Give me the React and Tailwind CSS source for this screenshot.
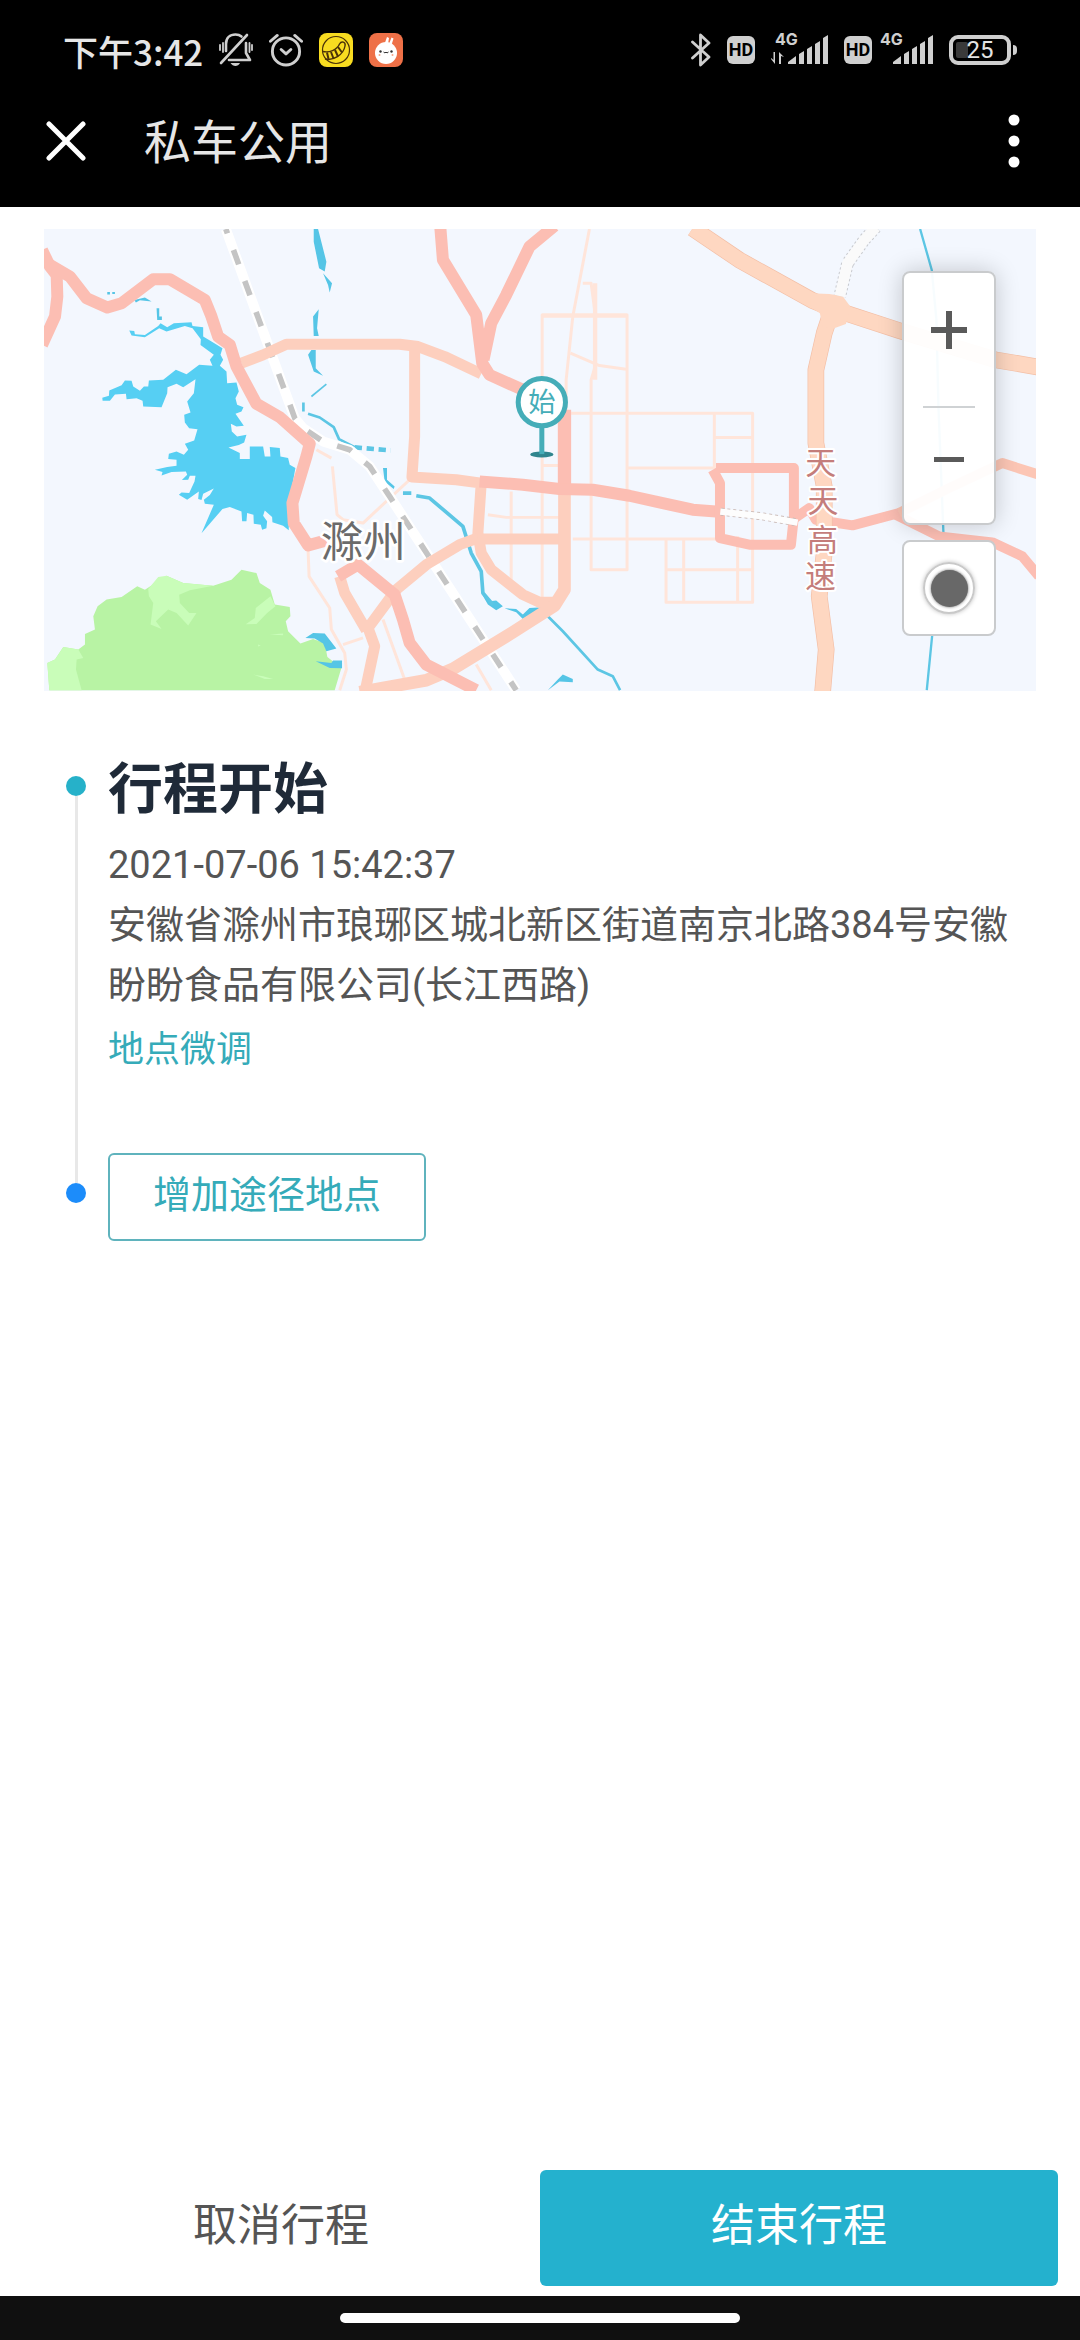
const LAKE =
  'M298 332L313 333L315 343L345 345L385 318L392 310L412 322L432 310L485 307L488 318L520 322L520 350L545 365L578 385L572 405L580 420L570 438L590 455L592 490L620 488L627 515L617 535L622 555L641 562L635 575L617 582L642 618L620 620L603 612L606 635L622 650L650 645L643 668L627 676L596 683L630 700L630 718L660 718L660 680L700 680L705 710L722 710L720 682L750 685L752 710L775 715L780 735L797 745L778 850L777 932L760 918L728 908L727 892L705 872L700 888L712 905L710 926L697 930L693 915L672 912L671 885L652 880L650 905L637 905L635 875L600 862L578 868L515 941L552 855L525 852L522 840L540 826L552 806L520 822L515 841L505 838L507 815L472 840L447 825L455 818L478 820L494 785L497 768L480 768L475 780L456 781L472 765L468 755L425 757L395 767L398 757L375 750L412 742L440 738L440 720L415 718L417 702L440 695L462 705L475 690L465 672L493 662L503 628L478 625L465 608L463 585L482 578L472 545L492 520L497 478L460 502L440 492L413 502L412 520L395 562L340 560L338 543L320 535L290 538L288 522L255 524L240 543L218 543L217 534L237 528L238 512L275 496L285 482L305 483L310 500L330 513L342 500L355 500L357 482L400 480L438 450L470 463L508 435L548 438L540 420L552 405L512 375L513 358L488 325L465 318L410 335L388 325L345 352L305 347Z';

const PARK =
  'M52 1330L75 1320L100 1282L145 1290L165 1275L165 1243L195 1230L190 1190L203 1160L230 1140L275 1132L322 1100L345 1110L410 1068L460 1090L550 1098L605 1080L635 1050L680 1060L690 1090L722 1110L735 1155L780 1162L782 1190L768 1205L775 1235L812 1272L850 1258L885 1270L893 1312L935 1345L915 1412H58Z';

function RouteMap() {
  return (
    <svg
      viewBox="42 27 2979 1386"
      className="block w-full bg-[#f3f7fe]"
      role="img"
      aria-label="滁州"
      fill="none"
      strokeLinejoin="round"
    >
      {/* Park */}
      <path d={PARK} fill="#b8f3a4" />
      <g fill="#c9fdb9">
        <path d="M355 1108L385 1072L410 1068L460 1090L550 1098L480 1112L448 1125L450 1150L478 1180L500 1180L475 1218L440 1180L415 1170L378 1205L395 1228L362 1215L370 1150L357 1130Z" />
        <path d="M722 1130L737 1160L712 1180L680 1213L648 1214L675 1195L678 1165Z" />
        <path d="M52 1330L75 1320L100 1282L145 1290L160 1315L140 1320L138 1350L155 1412H58Z" />
        <path d="M720 1245l40-3v5zM685 1275l8 3l-8 3zM670 1365l30 5l30 8h-25z" />
      </g>

      {/* Water */}
      <path d={LAKE} fill="#56cff3" />
      <g fill="#55c5e6">
        <path d="M827 1255L850 1240L885 1242L920 1287L890 1295L880 1272L855 1257ZM858 1325L905 1330L910 1323H937V1346L900 1345Z" />
        <path d="M852 27H865L890 125L885 155L868 145L852 65ZM880 160L907 190L900 218L895 195ZM867 268L862 325L867 348H852L850 290ZM845 390H858V445L880 468L852 455L835 405Z" />
        <path d="M232 216h8v8h-8zM247 216h8v6h-8zM380 265h8v25h8v10h-14zM313 240L345 233L365 245L330 241L318 248Z" />
        <path d="M1060 745H1072V780L1095 800L1092 808L1065 785ZM1555 1412L1585 1380L1600 1365L1630 1378V1388L1590 1386Z" />
        <path d="M1355 1120L1380 1145L1400 1143L1420 1160L1400 1172L1375 1155ZM1425 1166L1460 1168L1480 1185L1500 1165L1540 1163L1480 1198L1460 1178Z" />
      </g>
      <g stroke="#5cc6e4">
        <path d="M845 530L890 493" strokeWidth="5" />
        <path d="M821 548V575M835 582L870 593L912 622L928 658L975 682" strokeWidth="8" />
        <path d="M975 683L1060 690L1083 692" strokeWidth="14" strokeDasharray="22 14" />
        <path d="M1120 820H1145M1160 828L1200 835L1300 920L1325 1000L1355 1055L1360 1120L1390 1155" strokeWidth="11" />
        <path d="M1555 1190L1600 1235L1705 1350L1750 1370L1772 1412" strokeWidth="8" />
        <path d="M2673 27L2708 150L2722 300L2728 560L2743 940M2710 1240L2693 1412" strokeWidth="7" />
      </g>

      {/* Local streets */}
      <g stroke="#ffe5da" strokeWidth="9">
        <path d="M1680 27L1630 290L1610 480V570M1660 190H1685L1697 280V440L1685 480V1050H1793V285H1538V1150" />
        <path d="M1538 287H1793M1697 190V480" strokeWidth="13" />
        <path d="M1623 400L1710 437L1790 448M1625 580H2170V1148H1910V958M1793 745H2060M1630 958H2130M1910 1050H2170M1963 958V1148M2055 580V740M2055 653H2170M2125 950V1148" />
        <path d="M1538 737H1590M1445 815V1110M1375 885L1430 893H1590" />
        <path d="M908 740L922 885L940 900L1000 910L1140 780M860 690L905 715M835 990L838 1070L900 1165L905 1230L945 1300L950 1350L930 1412M940 1275L1000 1255M1060 1200L1125 1380M1340 1335L1385 1412" />
      </g>

      {/* Railway */}
      <path d="M588 27L795 595L820 625L880 665L960 690L1020 740L1080 830L1460 1412" stroke="#fff" strokeWidth="30" />
      <path d="M588 27L795 595L820 625L880 665L960 690L1020 740L1080 830L1460 1412" stroke="#c4c4c4" strokeWidth="17" strokeDasharray="46 53" strokeDashoffset="32" />

      {/* Main roads */}
      <g stroke="#fdcfbe" strokeWidth="33">
        <path d="M635 430L700 405L770 373H1110L1165 380L1245 410L1355 462" />
        <path d="M1155 390V650L1147 772L1280 780L1355 790L1345 940L1355 1000L1385 1050L1480 1125L1530 1148H1590" />
        <path d="M1345 958H1605" />
        <path d="M1605 820V1110L1575 1158L1450 1238L1270 1348L1190 1382L1060 1405L990 1418" strokeWidth="38" />
        <path d="M1345 955L1290 975L1190 1035L1100 1110L1015 1225L1035 1280L1007 1412M930 1070L945 1120L1010 1232" />
      </g>
      <g stroke="#fcbeb3" strokeWidth="36">
        <path d="M36 90L60 140L80 165L82 230L75 290L36 375" />
        <path d="M60 135L120 170L170 235L232 263L275 250L370 178H420L525 240L545 290L565 350L600 375L620 440L680 552L750 592L840 672L830 710L788 850L792 910L835 977L890 962" />
        <path d="M925 1070L985 1035L1095 1125L1120 1200L1140 1270L1190 1335L1340 1412" />
        <path d="M1232 20L1240 120L1340 285L1358 430L1380 465L1480 510M1575 18L1500 80L1430 225L1385 310L1362 420" />
        <path d="M1605 570V820" strokeWidth="40" />
        <path d="M1350 785L1480 795L1590 808L1690 810L1800 828L1900 850L1990 870L2070 876" />
        <path d="M2060 745H2294V890L2285 975H2160L2072 955V790L2050 750" strokeWidth="30" />
        <path d="M2290 900L2340 865L2360 900L2470 917L2610 880" strokeWidth="30" />
        <path d="M2600 885L2730 950L2890 968L2980 1010L3030 1070" strokeWidth="30" />
      </g>
      <path d="M2610 880L2770 800L2920 730L3030 765" stroke="#fcc6b5" strokeWidth="30" />

      {/* Expressways */}
      <g stroke="#f3bfa6" strokeWidth="50">
        <path d="M1990 25L2130 120L2350 242L2420 270L2610 332L2900 420L3030 442" />
        <path d="M2405 280L2385 340L2360 450V670L2385 800V1000L2370 1130L2391 1290L2380 1420" />
      </g>
      <g stroke="#fed7c1" strokeWidth="46">
        <path d="M1990 25L2130 120L2350 242L2420 270L2610 332L2900 420L3030 442" />
        <path d="M2405 280L2385 340L2360 450V670L2385 800V1000L2370 1130L2391 1290L2380 1420" />
      </g>
      <path d="M2345 220L2400 222L2440 228L2465 262L2450 312L2415 325L2380 320L2372 280L2345 262Z" fill="#fed7c1" />

      {/* Roads under construction */}
      <path d="M2540 22L2505 60L2455 130L2432 228" stroke="#c9cbd0" strokeWidth="38" strokeDasharray="7 7" />
      <path d="M2540 22L2505 60L2455 130L2432 228" stroke="#fafafa" strokeWidth="32" />
      <path d="M2075 876L2200 890L2303 908" stroke="#c9b9b5" strokeWidth="24" strokeDasharray="9 9" />
      <path d="M2073 876L2200 890L2305 909" stroke="#fdfdfd" strokeWidth="19" />

      {/* Place names */}
      <g fontFamily="'Noto Sans CJK SC', sans-serif" stroke="#fff" paintOrder="stroke">
        <text x="873" y="1013" fontSize="128" fill="#6b6b6b" strokeWidth="16">滁州</text>
        <text x="2328 2335 2333 2327" y="764 876 993 1103" fontSize="93" fill="#c47d7b" strokeWidth="12">天天高速</text>
      </g>

      {/* Start pin */}
      <ellipse cx="1537" cy="704" rx="35" ry="9" fill="#2f858e" />
      <path d="M1537 618V703" stroke="#45adb8" strokeWidth="15" />
      <circle cx="1537" cy="547" r="71" fill="#fff" stroke="#45adb8" strokeWidth="15" />
      <text x="1537" y="577" fontSize="82" fill="#45adb8" textAnchor="middle" fontFamily="'Noto Sans CJK SC', sans-serif">始</text>
    </svg>
  );
}

function BellOffIcon() {
  return (
    <svg width="34" height="34" viewBox="0 0 34 34" fill="none" stroke="#cfcfcf" strokeWidth="2.6" strokeLinecap="round">
      <path d="M28 2L2 30" />
      <path d="M7 18V11C7 5 11 1.5 16.5 1.5C19 1.5 21 2.2 22.5 3.5" />
      <path d="M27 10V20L31 27H10" strokeLinejoin="round" />
      <path d="M11.5 30H21C19 34 14 34 11.5 30Z" fill="#cfcfcf" stroke="none" />
      <path d="M1 12V17M4 10V19M30.5 10V19M33 12V17" strokeWidth="1.8" />
    </svg>
  );
}

function AlarmIcon() {
  return (
    <svg width="34" height="34" viewBox="0 0 35 34" fill="none" stroke="#cfcfcf" strokeWidth="3" strokeLinecap="round" strokeLinejoin="round">
      <circle cx="17.5" cy="18.5" r="14" />
      <path d="M12.500 16.500L17.500 21L22.500 16.500" />
      <path d="M1.500 8L8.500 2M33.500 8L26.500 2" />
    </svg>
  );
}

function YellowAppIcon() {
  return (
    <svg width="34" height="34" viewBox="0 0 34 34" fill="none" stroke="#4a3208">
      <rect width="34" height="34" rx="8" fill="#f8dc20" stroke="none" />
      <circle cx="17" cy="17" r="13.5" strokeWidth="1.2" />
      <path d="M4 18.500C10 20 18 17 20.500 11C22.500 7.500 27 9 26 13C24.500 22 14 28 6 26" strokeWidth="1.4" />
      <path d="M8 19.500L9.500 26M12 19L14.500 25.500M16 17L19 23.500M19 14L23 19.500" strokeWidth="2" />
    </svg>
  );
}

function RabbitAppIcon() {
  return (
    <svg width="34" height="34" viewBox="0 0 34 34">
      <rect width="34" height="34" rx="8" fill="#ee7047" />
      <path d="M15.500 11L18 4L20 5L19 11M20 11L22.500 4.500L24.500 5.500L22.500 12" fill="#fff" />
      <ellipse cx="17" cy="20" rx="11" ry="11" fill="#fff" />
      <circle cx="11.500" cy="18.500" r="1.200" fill="#333" />
      <circle cx="22.500" cy="18.500" r="1.200" fill="#333" />
      <path d="M14.500 19L16 20L17 19L18 20L19.500 19" fill="none" stroke="#333" />
      <circle cx="10.500" cy="22" r="1" fill="#f5a58a" />
      <circle cx="23.500" cy="22" r="1" fill="#f5a58a" />
    </svg>
  );
}

function BluetoothIcon() {
  return (
    <svg width="20" height="34" viewBox="0 0 20 34" fill="none" stroke="#cfcfcf" strokeWidth="2.8" strokeLinejoin="round" strokeLinecap="round">
      <path d="M1.500 9L18 24L9.500 32V2L18 10L1.500 25" />
    </svg>
  );
}

function HdBadge() {
  return (
    <span className="flex h-7 w-7 items-center justify-center rounded-md bg-[#cfcfcf] text-[18px] font-bold leading-none text-black">
      HD
    </span>
  );
}

function Signal({ data = false }) {
  return (
    <svg width={data ? 57 : 53} height="54" viewBox={data ? '0 -10 57 54' : '4 -10 53 54'} fill="#cfcfcf">
      <text x="4" y="12" fontSize="16" fontWeight="700" fontFamily="Inter, sans-serif">4G</text>
      <path d="M17 31V29L25 23V31ZM28 31V21L33 18V31ZM36 31V16L41 13V31ZM44 31V11L49 8V31ZM52 31V5L57 2V31Z" />
      {data && <path d="M4 19V31L0 26V25L2.500 27V19ZM8 31V19L13 24L10 23V31Z" />}
    </svg>
  );
}

function Battery() {
  return (
    <span className="flex items-center gap-[2px]">
      <span className="relative flex h-[30px] w-[62px] items-center justify-center rounded-[9px] border-4 border-[#cfcfcf]">
        <span className="absolute left-[3px] h-4 w-3 rounded-xs bg-[#3a3a3a]" />
        <span className="relative text-[24px] leading-none text-[#e4e4e4]">25</span>
      </span>
      <span className="h-[10px] w-1 rounded-r-sm bg-[#cfcfcf]" />
    </span>
  );
}

function StatusBar() {
  return (
    <div className="flex h-[100px] items-center justify-between px-[63px]">
      <div className="flex items-center gap-4">
        <span className="text-[35px] font-medium leading-none text-[#e6e6e6] font-['Noto_Sans_CJK_SC',sans-serif]">下午3:42</span>
        <BellOffIcon />
        <AlarmIcon />
        <YellowAppIcon />
        <RabbitAppIcon />
      </div>
      <div className="flex items-center gap-4">
        <BluetoothIcon />
        <HdBadge />
        <Signal data />
        <span className="flex items-center gap-2">
          <HdBadge />
          <Signal />
        </span>
        <Battery />
      </div>
    </div>
  );
}

function TitleBar() {
  return (
    <div className="flex h-[107px] items-start px-11 pt-[7px]">
      <button type="button" aria-label="关闭" className="flex h-[68px] w-11 items-center justify-center">
        <svg width="40" height="40" viewBox="0 0 40 40" stroke="#fff" strokeWidth="5" strokeLinecap="round">
          <path d="M3 3L37 37M37 3L3 37" />
        </svg>
      </button>
      <h1 className="ml-14 flex-1 text-[47px] leading-[72px] text-[#e6e6e6]">私车公用</h1>
      <button type="button" aria-label="更多" className="flex h-[68px] w-11 items-center justify-center">
        <svg width="12" height="54" viewBox="0 0 12 54" fill="#fff">
          <circle cx="6" cy="6" r="5.500" />
          <circle cx="6" cy="27" r="5.500" />
          <circle cx="6" cy="48" r="5.500" />
        </svg>
      </button>
    </div>
  );
}

function MapControls() {
  return (
    <div className="absolute right-10 top-[42px] flex w-[94px] flex-col gap-[15px]">
      <div className="flex flex-col items-center rounded-lg border-2 border-[#c9cbcd] bg-white/95 shadow-[0_0_24px_rgba(0,0,0,0.2)]">
        <button type="button" aria-label="放大" className="flex h-[133px] w-full items-center justify-center pb-5">
          <svg width="36" height="38" viewBox="0 0 36 38" stroke="#5a5a5a" strokeWidth="6">
            <path d="M0 19H36M18 0V38" />
          </svg>
        </button>
        <span className="h-[2px] w-[52px] bg-[#cfd2d4]" />
        <button type="button" aria-label="缩小" className="flex h-[115px] w-full items-center justify-center pb-3">
          <span className="h-[5px] w-[30px] bg-[#5a5a5a]" />
        </button>
      </div>
      <button
        type="button"
        aria-label="定位"
        className="flex h-24 items-center justify-center rounded-lg border-2 border-[#c9cbcd] bg-white"
      >
        <span className="flex h-[52px] w-[52px] items-center justify-center rounded-full border-2 border-[#c9c9c9] shadow-[0_0_4px_rgba(0,0,0,0.25)]">
          <span className="h-[37px] w-[37px] rounded-full bg-[#686868] shadow-[0_0_3px_rgba(0,0,0,0.6)]" />
        </span>
      </button>
    </div>
  );
}

function TripTimeline() {
  return (
    <ol className="mt-[60px] pl-[22px]">
      <li className="flex gap-[22px]">
        <div className="flex w-5 flex-col items-center pt-[25px]">
          <span className="h-5 w-5 shrink-0 rounded-full bg-[#26b1c9]" />
          <span className="w-[3px] flex-1 bg-[#e8e8e8]" />
        </div>
        <div className="flex-1 pb-[68px]">
          <h2 className="text-[55px] font-bold leading-[76px] text-[#1f2a38]">行程开始</h2>
          <p className="mt-2 text-[38px] leading-[60px] text-[#555]">
            2021-07-06 15:42:37
            <br />
            安徽省滁州市琅琊区城北新区街道南京北路384号安徽盼盼食品有限公司(长江西路)
          </p>
          <button type="button" className="block text-[36px] leading-[70px] text-[#35abb9]">地点微调</button>
        </div>
      </li>
      <li className="flex gap-[22px]">
        <div className="flex w-5 flex-col items-center">
          <span className="h-[30px] w-[3px] bg-[#e8e8e8]" />
          <span className="h-5 w-5 rounded-full bg-[#1c8cfa]" />
        </div>
        <button
          type="button"
          className="h-[88px] rounded-md border-2 border-[#5fb3bd] px-[43px] pb-1 text-[38px] leading-none text-[#35abb9]"
        >
          增加途径地点
        </button>
      </li>
    </ol>
  );
}

export default function App() {
  return (
    <div className="flex min-h-screen flex-col bg-white font-[Roboto,'Noto_Sans_CJK_SC',sans-serif]" lang="zh-CN">
      <header className="bg-black">
        <StatusBar />
        <TitleBar />
      </header>
      <main className="flex-1 px-11 pt-[22px]">
        <div className="relative">
          <RouteMap />
          <MapControls />
        </div>
        <TripTimeline />
      </main>
      <footer>
        <div className="grid grid-cols-2 px-[22px] pb-[10px] text-[44px] leading-none">
          <button type="button" className="h-[116px] rounded-md pb-1 text-[#555]">取消行程</button>
          <button type="button" className="h-[116px] rounded-md bg-[#24b1ce] pb-1 text-white">结束行程</button>
        </div>
        <div className="flex h-11 items-center justify-center bg-[#101010]">
          <span className="h-[10px] w-[37%] rounded-full bg-white" />
        </div>
      </footer>
    </div>
  );
}
